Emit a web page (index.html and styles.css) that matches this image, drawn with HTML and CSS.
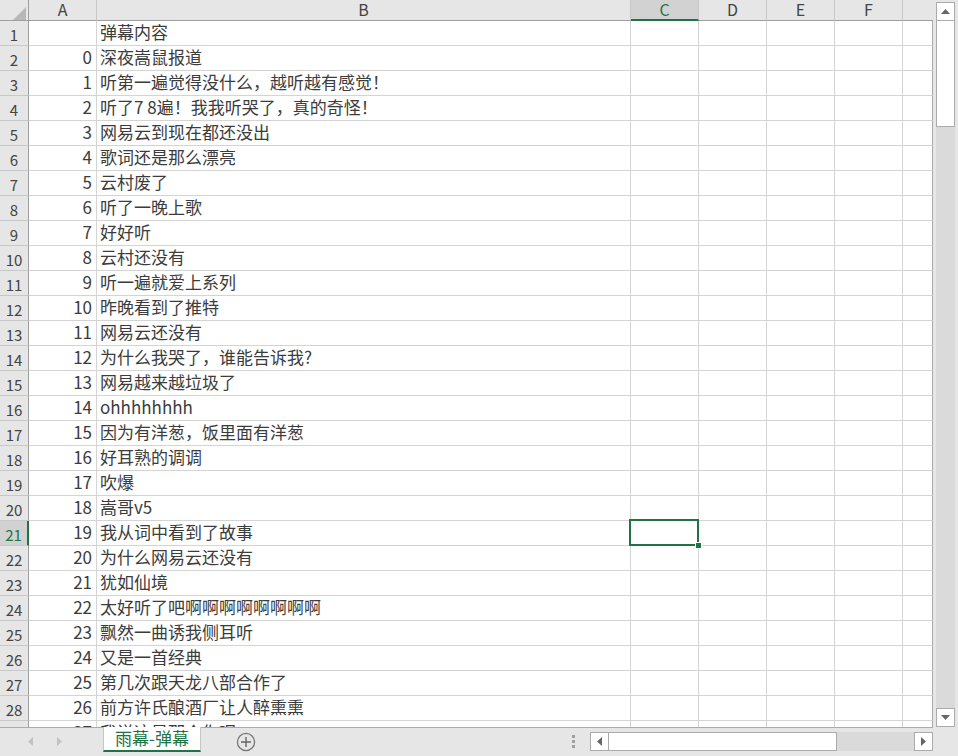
FILE: index.html
```html
<!DOCTYPE html>
<html lang="zh-CN">
<head>
    <meta charset="UTF-8">
    <title>弹幕 - Excel</title>
    <link rel="stylesheet" href="styles.css">
</head>
<body>
<div class="app">
    <div class="main">
        <div class="sheet">
            <table class="grid">
                <colgroup>
                    <col class="w-rh"><col class="w-a"><col class="w-b"><col class="w-n"><col class="w-n"><col class="w-n"><col class="w-n"><col class="w-g">
                </colgroup>
                <thead>
                    <tr class="colhead">
                        <th class="corner"><svg width="13" height="13" viewBox="0 0 13 13"><path d="M13 0 L13 13 L0 13 Z" fill="#b8b8b8"/></svg></th>
                        <th>A</th><th>B</th><th class="sel">C</th><th>D</th><th>E</th><th>F</th><th class="g"></th>
                    </tr>
                </thead>
                <tbody>
                    <tr><th>1</th><td class="n"></td><td>弹幕内容</td><td></td><td></td><td></td><td></td><td class="g"></td></tr>
                    <tr><th>2</th><td class="n">0</td><td>深夜嵩鼠报道</td><td></td><td></td><td></td><td></td><td class="g"></td></tr>
                    <tr><th>3</th><td class="n">1</td><td>听第一遍觉得没什么，越听越有感觉！</td><td></td><td></td><td></td><td></td><td class="g"></td></tr>
                    <tr><th>4</th><td class="n">2</td><td>听了7 8遍！我我听哭了，真的奇怪！</td><td></td><td></td><td></td><td></td><td class="g"></td></tr>
                    <tr><th>5</th><td class="n">3</td><td>网易云到现在都还没出</td><td></td><td></td><td></td><td></td><td class="g"></td></tr>
                    <tr><th>6</th><td class="n">4</td><td>歌词还是那么漂亮</td><td></td><td></td><td></td><td></td><td class="g"></td></tr>
                    <tr><th>7</th><td class="n">5</td><td>云村废了</td><td></td><td></td><td></td><td></td><td class="g"></td></tr>
                    <tr><th>8</th><td class="n">6</td><td>听了一晚上歌</td><td></td><td></td><td></td><td></td><td class="g"></td></tr>
                    <tr><th>9</th><td class="n">7</td><td>好好听</td><td></td><td></td><td></td><td></td><td class="g"></td></tr>
                    <tr><th>10</th><td class="n">8</td><td>云村还没有</td><td></td><td></td><td></td><td></td><td class="g"></td></tr>
                    <tr><th>11</th><td class="n">9</td><td>听一遍就爱上系列</td><td></td><td></td><td></td><td></td><td class="g"></td></tr>
                    <tr><th>12</th><td class="n">10</td><td>昨晚看到了推特</td><td></td><td></td><td></td><td></td><td class="g"></td></tr>
                    <tr><th>13</th><td class="n">11</td><td>网易云还没有</td><td></td><td></td><td></td><td></td><td class="g"></td></tr>
                    <tr><th>14</th><td class="n">12</td><td>为什么我哭了，谁能告诉我?</td><td></td><td></td><td></td><td></td><td class="g"></td></tr>
                    <tr><th>15</th><td class="n">13</td><td>网易越来越垃圾了</td><td></td><td></td><td></td><td></td><td class="g"></td></tr>
                    <tr><th>16</th><td class="n">14</td><td>ohhhhhhhh</td><td></td><td></td><td></td><td></td><td class="g"></td></tr>
                    <tr><th>17</th><td class="n">15</td><td>因为有洋葱，饭里面有洋葱</td><td></td><td></td><td></td><td></td><td class="g"></td></tr>
                    <tr><th>18</th><td class="n">16</td><td>好耳熟的调调</td><td></td><td></td><td></td><td></td><td class="g"></td></tr>
                    <tr><th>19</th><td class="n">17</td><td>吹爆</td><td></td><td></td><td></td><td></td><td class="g"></td></tr>
                    <tr><th>20</th><td class="n">18</td><td>嵩哥v5</td><td></td><td></td><td></td><td></td><td class="g"></td></tr>
                    <tr><th class="sel">21</th><td class="n">19</td><td>我从词中看到了故事</td><td class="active"></td><td></td><td></td><td></td><td class="g"></td></tr>
                    <tr><th>22</th><td class="n">20</td><td>为什么网易云还没有</td><td></td><td></td><td></td><td></td><td class="g"></td></tr>
                    <tr><th>23</th><td class="n">21</td><td>犹如仙境</td><td></td><td></td><td></td><td></td><td class="g"></td></tr>
                    <tr><th>24</th><td class="n">22</td><td>太好听了吧啊啊啊啊啊啊啊啊</td><td></td><td></td><td></td><td></td><td class="g"></td></tr>
                    <tr><th>25</th><td class="n">23</td><td>飘然一曲诱我侧耳听</td><td></td><td></td><td></td><td></td><td class="g"></td></tr>
                    <tr><th>26</th><td class="n">24</td><td>又是一首经典</td><td></td><td></td><td></td><td></td><td class="g"></td></tr>
                    <tr><th>27</th><td class="n">25</td><td>第几次跟天龙八部合作了</td><td></td><td></td><td></td><td></td><td class="g"></td></tr>
                    <tr><th>28</th><td class="n">26</td><td>前方许氏酿酒厂让人醉熏熏</td><td></td><td></td><td></td><td></td><td class="g"></td></tr>
                    <tr><th>29</th><td class="n">27</td><td>我说这是那个你呢</td><td></td><td></td><td></td><td></td><td class="g"></td></tr>
                </tbody>
            </table>
        </div>
        <div class="vscroll">
            <div class="sbtn"><svg width="9" height="5" viewBox="0 0 9 5"><path d="M0 5 L4.5 0 L9 5 Z" fill="#666"/></svg></div>
            <div class="vtrack"><div class="vthumb"></div></div>
            <div class="sbtn"><svg width="9" height="5" viewBox="0 0 9 5"><path d="M0 0 L9 0 L4.5 5 Z" fill="#666"/></svg></div>
        </div>
    </div>

    <div class="tabbar">
        <div class="tabnav">
            <svg width="5" height="9" viewBox="0 0 5 9"><path d="M5 0 L0 4.5 L5 9 Z" fill="#c2c2c2"/></svg>
            <svg width="5" height="9" viewBox="0 0 5 9"><path d="M0 0 L5 4.5 L0 9 Z" fill="#c2c2c2"/></svg>
        </div>
        <div class="tab">雨幕-弹幕</div>
        <div class="addsheet">
            <svg width="20" height="20" viewBox="0 0 20 20">
                <circle cx="10" cy="10" r="8.6" fill="none" stroke="#777" stroke-width="1.3"/>
                <path d="M10 5 V15 M5 10 H15" stroke="#666" stroke-width="1.4"/>
            </svg>
        </div>
        <div class="spacer"></div>
        <div class="grip"><i></i><i></i><i></i></div>
        <div class="hscroll">
            <div class="sbtn h"><svg width="5" height="9" viewBox="0 0 5 9"><path d="M5 0 L0 4.5 L5 9 Z" fill="#666"/></svg></div>
            <div class="hthumb"></div>
            <div class="htrack"></div>
            <div class="sbtn h"><svg width="5" height="9" viewBox="0 0 5 9"><path d="M0 0 L5 4.5 L0 9 Z" fill="#666"/></svg></div>
        </div>
    </div>
</div>
</body>
</html>
```

FILE: styles.css
```css
body {
    margin: 0;
    background: #e6e6e6;
    font-family: "Noto Sans CJK SC", "Noto Sans", sans-serif;
    color: #3c3c3c;
    overflow: hidden;
}
.app {
    width: 958px;
    height: 756px;
    display: flex;
    flex-direction: column;
}
.main {
    display: flex;
    height: 728px;
}
.sheet {
    width: 933px;
    height: 728px;
    box-sizing: border-box;
    border-bottom: 1px solid #ababab;
    background: #fff;
    overflow: hidden;
}
.grid {
    border-collapse: separate;
    border-spacing: 0;
    table-layout: fixed;
    width: 933px;
}
.w-rh { width: 29px; }
.w-a { width: 68px; }
.w-b { width: 534px; }
.w-n { width: 68px; }
.w-g { width: 30px; }

.grid td, .grid th {
    padding: 0;
    box-sizing: border-box;
    white-space: nowrap;
    font-weight: normal;
}
.grid tbody tr { height: 25px; }
.grid td {
    border-right: 1px solid #d4d4d4;
    border-bottom: 1px solid #d4d4d4;
    font-size: 17px;
    line-height: 22px;
    padding-left: 3px;
    vertical-align: top;
    overflow: hidden;
}
.grid td.n {
    text-align: right;
    padding-left: 0;
    padding-right: 4px;
}
.grid td.g { border-right: 1px solid #ababab; }

/* column letters */
.colhead { height: 21px; }
.colhead th {
    background: #e6e6e6;
    border-right: 1px solid #c8c8c8;
    border-bottom: 1px solid #9e9e9e;
    font-size: 16px;
    line-height: 19px;
    color: #444;
    vertical-align: top;
}
.colhead th.g { border-right: none; }
.colhead th.corner {
    border-right: 1px solid #9e9e9e;
    text-align: right;
    vertical-align: bottom;
}
.corner svg {
    display: block;
    margin: 5px 2px 0 auto;
}
.colhead th.sel {
    background: #d2d2d2;
    color: #217346;
    border-bottom: 2px solid #217346;
}

/* row numbers */
.grid tbody th {
    background: #e6e6e6;
    border-right: 1px solid #9e9e9e;
    border-bottom: 1px solid #c8c8c8;
    font-size: 15px;
    line-height: 21px;
    padding-top: 3px;
    color: #444;
    text-align: center;
    vertical-align: top;
}
.grid tbody th.sel {
    background: #d2d2d2;
    color: #217346;
    border-right: 2px solid #217346;
}

/* selected cell */
.grid td.active {
    position: relative;
    overflow: visible;
}
.grid td.active::after {
    content: "";
    position: absolute;
    left: -2px;
    top: -2px;
    right: -1px;
    bottom: -1px;
    border: 2px solid #217346;
}
.grid td.active::before {
    content: "";
    position: absolute;
    right: -4px;
    bottom: -4px;
    width: 5px;
    height: 5px;
    background: #217346;
    border: 1px solid #fff;
    z-index: 2;
}

/* vertical scrollbar */
.vscroll {
    width: 25px;
    display: flex;
    flex-direction: column;
    padding: 2px 3px 1px 3px;
    box-sizing: border-box;
}
.sbtn {
    height: 19px;
    box-sizing: border-box;
    background: #fff;
    border: 1px solid #ababab;
    display: flex;
    align-items: center;
    justify-content: center;
}
.vtrack {
    flex: 1;
    background: #dadada;
}
.vthumb {
    height: 107px;
    margin-top: -1px;
    background: #fff;
    border: 1px solid #ababab;
    box-sizing: border-box;
}

/* sheet tabs */
.tabbar {
    height: 28px;
    display: flex;
    align-items: flex-start;
}
.tabnav {
    width: 103px;
    display: flex;
    gap: 24px;
    padding: 9px 0 0 28px;
    box-sizing: border-box;
}
.tabnav svg { display: block; }
.tab {
    position: relative;
    margin-top: -1px;
    width: 98px;
    height: 25px;
    box-sizing: border-box;
    background: #fff;
    border-left: 1px solid #c6c6c6;
    border-right: 1px solid #c6c6c6;
    border-bottom: 2px solid #217346;
    color: #217346;
    font-size: 17px;
    line-height: 21px;
    text-align: center;
}
.addsheet {
    margin: 4px 0 0 35px;
}
.addsheet svg { display: block; }
.spacer { flex: 1; }
.grip {
    display: flex;
    flex-direction: column;
    gap: 2px;
    padding-top: 7px;
    margin-right: 15px;
}
.grip i {
    display: block;
    width: 3px;
    height: 3px;
    background: #a0a0a0;
}
.hscroll {
    width: 343px;
    height: 19px;
    margin: 4px 25px 0 0;
    display: flex;
}
.sbtn.h { width: 19px; height: 19px; }
.hthumb {
    width: 229px;
    margin-left: -1px;
    background: #fff;
    border: 1px solid #ababab;
    box-sizing: border-box;
}
.htrack {
    flex: 1;
    background: #dadada;
}
```
